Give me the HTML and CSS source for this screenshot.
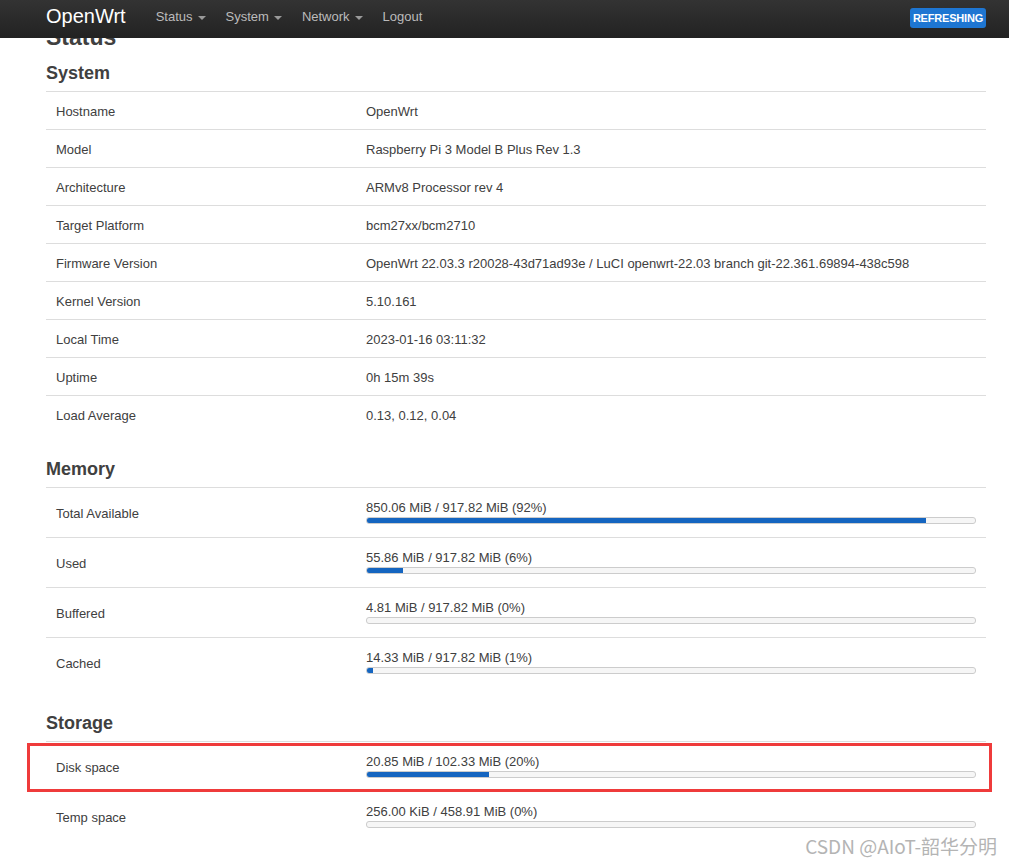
FILE: index.html
```html
<!DOCTYPE html>
<html lang="en">
<head>
<meta charset="utf-8">
<title>OpenWrt - Status</title>
<link rel="stylesheet" href="styles.css">
</head>
<body>
<header class="navbar">
  <div class="nav-inner">
    <span class="brand">OpenWrt</span>
    <ul class="nav">
      <li class="nav-item">Status<span class="caret"></span></li>
      <li class="nav-item">System<span class="caret"></span></li>
      <li class="nav-item">Network<span class="caret"></span></li>
      <li class="nav-item">Logout</li>
    </ul>
    <span class="badge">REFRESHING</span>
  </div>
</header>

<main class="container">
  <h2 class="page-title">Status</h2>

  <section class="section">
    <h3 class="section-title">System</h3>
    <table class="info">
      <tr><td class="label">Hostname</td><td class="value">OpenWrt</td></tr>
      <tr><td class="label">Model</td><td class="value">Raspberry Pi 3 Model B Plus Rev 1.3</td></tr>
      <tr><td class="label">Architecture</td><td class="value">ARMv8 Processor rev 4</td></tr>
      <tr><td class="label">Target Platform</td><td class="value">bcm27xx/bcm2710</td></tr>
      <tr><td class="label">Firmware Version</td><td class="value">OpenWrt 22.03.3 r20028-43d71ad93e / LuCI openwrt-22.03 branch git-22.361.69894-438c598</td></tr>
      <tr><td class="label">Kernel Version</td><td class="value">5.10.161</td></tr>
      <tr><td class="label">Local Time</td><td class="value">2023-01-16 03:11:32</td></tr>
      <tr><td class="label">Uptime</td><td class="value">0h 15m 39s</td></tr>
      <tr><td class="label">Load Average</td><td class="value">0.13, 0.12, 0.04</td></tr>
    </table>
  </section>

  <section class="section">
    <h3 class="section-title">Memory</h3>
    <table class="info progress-table">
      <tr><td class="label">Total Available</td><td class="value"><div class="pb-text">850.06 MiB / 917.82 MiB (92%)</div><div class="pb"><div class="pb-fill" style="width:92%"></div></div></td></tr>
      <tr><td class="label">Used</td><td class="value"><div class="pb-text">55.86 MiB / 917.82 MiB (6%)</div><div class="pb"><div class="pb-fill" style="width:6%"></div></div></td></tr>
      <tr><td class="label">Buffered</td><td class="value"><div class="pb-text">4.81 MiB / 917.82 MiB (0%)</div><div class="pb"><div class="pb-fill" style="width:0%"></div></div></td></tr>
      <tr><td class="label">Cached</td><td class="value"><div class="pb-text">14.33 MiB / 917.82 MiB (1%)</div><div class="pb"><div class="pb-fill" style="width:1%"></div></div></td></tr>
    </table>
  </section>

  <section class="section">
    <h3 class="section-title">Storage</h3>
    <table class="info progress-table">
      <tr><td class="label">Disk space</td><td class="value"><div class="pb-text">20.85 MiB / 102.33 MiB (20%)</div><div class="pb"><div class="pb-fill" style="width:20%"></div></div></td></tr>
      <tr><td class="label">Temp space</td><td class="value"><div class="pb-text">256.00 KiB / 458.91 MiB (0%)</div><div class="pb"><div class="pb-fill" style="width:0%"></div></div></td></tr>
    </table>
  </section>
</main>

<div class="annotation"></div>
<div class="watermark">CSDN @AIoT-韶华分明</div>
</body>
</html>
```

FILE: styles.css
```css
html, body {
  margin: 0;
  padding: 0;
  background: #fff;
}

body {
  font-family: "Liberation Sans", Arial, sans-serif;
  font-size: 13px;
  color: #404040;
}

/* ---------- navbar ---------- */
.navbar {
  position: fixed;
  top: 0;
  left: 0;
  right: 0;
  height: 38px;
  background: linear-gradient(#333333, #222222);
  z-index: 10;
}

.nav-inner {
  width: 940px;
  margin-left: 46px;
  height: 38px;
  display: flex;
  align-items: flex-start;
}

.brand {
  margin-top: 4px;
  font-size: 20px;
  line-height: 24px;
  color: #ffffff;
  margin-right: 20px;
}

.nav {
  list-style: none;
  margin: 0;
  padding: 0;
  display: flex;
}

.nav-item {
  padding: 9px 10px 0;
  font-size: 13px;
  line-height: 16px;
  color: #bbbbbb;
  white-space: nowrap;
}

.caret {
  display: inline-block;
  width: 0;
  height: 0;
  margin-left: 5px;
  vertical-align: middle;
  border-left: 4px solid transparent;
  border-right: 4px solid transparent;
  border-top: 4px solid #9a9a9a;
}

.badge {
  margin-left: auto;
  margin-top: 8px;
  height: 20px;
  line-height: 20px;
  padding: 0 3px;
  border-radius: 3px;
  background: #1e76d2;
  color: #ffffff;
  font-size: 11px;
  font-weight: bold;
  letter-spacing: -0.2px;
}

/* ---------- content ---------- */
.container {
  width: 940px;
  margin-left: 46px;
  padding-top: 24px;
}

.page-title {
  margin: 0 0 13px;
  font-size: 23px;
  line-height: 26px;
  font-weight: bold;
  color: #404040;
}

.section + .section {
  margin-top: 26px;
}

.section-title {
  margin: 0 0 8px;
  font-size: 18px;
  line-height: 20px;
  font-weight: bold;
  color: #404040;
}

.info {
  width: 100%;
  border-collapse: collapse;
  table-layout: fixed;
}

.info tr {
  border-top: 1px solid #dddddd;
}

.info td {
  padding: 11px 10px 9px;
  line-height: 17px;
  vertical-align: middle;
  white-space: nowrap;
}

.info td.label {
  width: 290px;
}

.progress-table td.label {
  padding-top: 10px;
}

.progress-table td.value {
  padding: 12px 10px 13px;
}

.pb-text {
  line-height: 16px;
}

.pb {
  margin-top: 1px;
  height: 7px;
  box-sizing: border-box;
  border: 1px solid #cccccc;
  border-radius: 3px;
  background: #f6f6f6;
  overflow: hidden;
}

.pb-fill {
  height: 100%;
  background: #1565c0;
}

/* ---------- overlays ---------- */
.annotation {
  position: absolute;
  left: 27px;
  top: 743px;
  width: 965px;
  height: 49px;
  box-sizing: border-box;
  border: 3px solid #ef3b3b;
}

.watermark {
  position: absolute;
  right: 12px;
  top: 832px;
  font-family: "Noto Sans CJK SC", "Liberation Sans", sans-serif;
  font-size: 19px;
  line-height: 28px;
  color: #b4b4b4;
}
```
